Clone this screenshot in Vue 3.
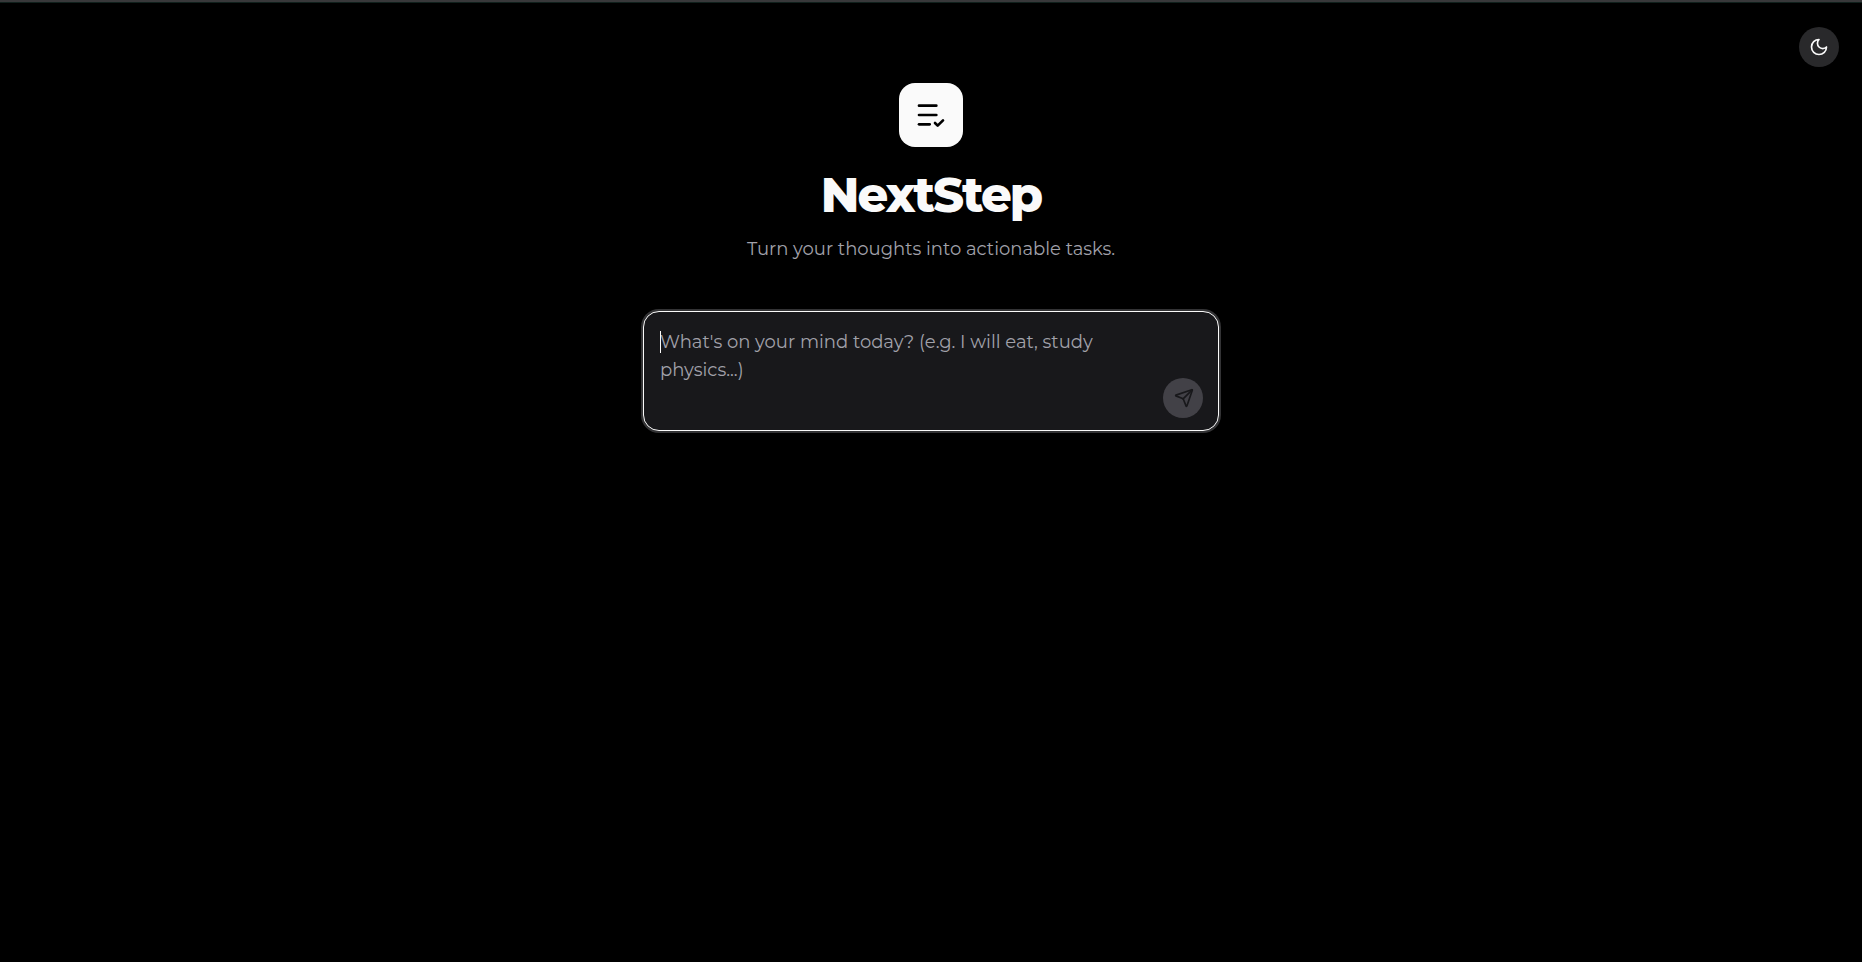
<template>
  <div class="page">
    <button class="theme-btn" type="button" aria-label="Toggle theme">
      <svg width="20" height="20" viewBox="0 0 24 24" class="icon">
        <path d="M12 3a6 6 0 0 0 9 9 9 9 0 1 1-9-9Z" />
      </svg>
    </button>

    <main class="container">
      <header class="hero">
        <div class="logo">
          <svg width="32" height="32" viewBox="0 0 24 24" class="icon">
            <path d="M16 5H3" />
            <path d="M16 12H3" />
            <path d="M11 19H3" />
            <path d="m15 18 2 2 4-4" />
          </svg>
        </div>
        <h1 class="title">NextStep</h1>
        <p class="subtitle">Turn your thoughts into actionable tasks.</p>
      </header>

      <form class="prompt" @submit.prevent="submit">
        <textarea
          v-model="text"
          class="prompt-input"
          aria-label="Your thoughts"
          placeholder="What's on your mind today? (e.g. I will eat, study physics...)"
        ></textarea>
        <span v-if="!text" class="caret"></span>
        <button
          class="send-btn"
          type="submit"
          aria-label="Send"
          :disabled="!text.trim()"
        >
          <svg width="20" height="20" viewBox="0 0 24 24" class="icon">
            <path
              d="M14.536 21.686a.5.5 0 0 0 .937-.024l6.5-19a.496.496 0 0 0-.635-.635l-19 6.5a.5.5 0 0 0-.024.937l7.93 3.18a2 2 0 0 1 1.112 1.11z"
            />
            <path d="m21.854 2.147-10.94 10.939" />
          </svg>
        </button>
      </form>
    </main>
  </div>
</template>

<script setup>
import { ref } from "vue";

const text = ref("");

const submit = () => {
  text.value = "";
};
</script>

<style>
body {
  margin: 0;
  background: #000;
}
</style>

<style scoped>
.page {
  position: relative;
  box-sizing: border-box;
  min-height: 100vh;
  border-top: 2px solid #38383a;
  box-shadow: inset 0 1px 0 #10201c;
  background: #000;
  color: #fafafa;
  font-family: "Montserrat", "Inter", sans-serif;
}

.icon {
  display: block;
  fill: none;
  stroke: currentColor;
  stroke-width: 2;
  stroke-linecap: round;
  stroke-linejoin: round;
}

.theme-btn {
  position: absolute;
  top: 25px;
  right: 23px;
  display: flex;
  align-items: center;
  justify-content: center;
  width: 40px;
  height: 40px;
  padding: 0;
  border: none;
  border-radius: 50%;
  background: #29292b;
  color: #fafafa;
  cursor: pointer;
}

.container {
  box-sizing: border-box;
  max-width: 640px;
  margin: 0 auto;
  padding: 81px 32px 32px;
}

.hero {
  display: flex;
  flex-direction: column;
  align-items: center;
  margin-bottom: 48px;
  text-align: center;
}
.logo {
  display: flex;
  align-items: center;
  justify-content: center;
  width: 64px;
  height: 64px;
  margin-bottom: 20px;
  border-radius: 16px;
  background: #fafafa;
  color: #000;
}
.title {
  margin: 0 0 12px;
  font-size: 48px;
  font-weight: 800;
  line-height: 56px;
  letter-spacing: -0.04em;
}
.subtitle {
  margin: 0;
  font-size: 18px;
  line-height: 28px;
  color: #a1a1aa;
}

.prompt {
  position: relative;
}
.prompt-input {
  display: block;
  box-sizing: border-box;
  width: 100%;
  height: 120px;
  padding: 16px 64px 16px 16px;
  border: 1px solid #fafafa;
  border-radius: 16px;
  outline: none;
  box-shadow: 0 0 0 2px #333335;
  background: #18181b;
  color: #fafafa;
  font-family: inherit;
  font-size: 18px;
  line-height: 28px;
  resize: none;
}
.prompt-input::placeholder {
  color: #a1a1aa;
  opacity: 1;
}
.caret {
  position: absolute;
  top: 20px;
  left: 17px;
  width: 1px;
  height: 22px;
  background: #fafafa;
  pointer-events: none;
}
.send-btn {
  position: absolute;
  right: 16px;
  bottom: 13px;
  display: flex;
  align-items: center;
  justify-content: center;
  box-sizing: border-box;
  width: 40px;
  height: 40px;
  padding: 0 0 0 2px;
  border: none;
  border-radius: 50%;
  background: #fafafa;
  color: #18181b;
  cursor: pointer;
}
.send-btn:disabled {
  background: #424147;
  cursor: default;
}
</style>
